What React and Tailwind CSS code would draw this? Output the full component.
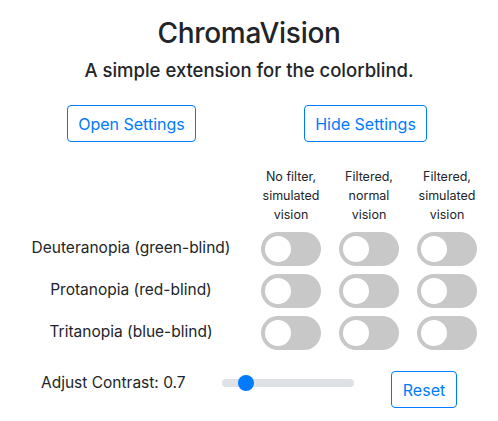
import { useState } from "react";

const font = { fontFamily: "Inter, 'Noto Sans', sans-serif" };

const rows = ["Deuteranopia (green-blind)", "Protanopia (red-blind)", "Tritanopia (blue-blind)"];
const heads = [
  ["No filter,", "simulated", "vision"],
  ["Filtered,", "normal", "vision"],
  ["Filtered,", "simulated", "vision"],
];

const Toggle = ({ on, onClick }) => (
  <button
    onClick={onClick}
    className={
      "flex h-[34px] w-[60px] items-center rounded-full px-[4px] " +
      (on ? "justify-end bg-[#2196f3]" : "justify-start bg-[#c8c8c8]")
    }
  >
    <span className="size-[26px] rounded-full bg-white" />
  </button>
);

export default function App() {
  const [state, setState] = useState(Array(9).fill(false));
  const flip = (i) => setState((s) => s.map((v, j) => (j === i ? !v : v)));

  return (
    <div className="h-[421px] w-[498px] bg-white text-[#212529]" style={font}>
      <h3 className="pt-[16px] text-center text-[28px] leading-[34px] font-medium tracking-[-0.3px]">ChromaVision</h3>
      <h5 className="mt-[8px] text-center text-[18.5px] leading-[24px] font-medium">
        A simple extension for the colorblind.
      </h5>

      <div className="mt-[23px] flex">
        <button className="ml-[67px] h-[37px] w-[129px] rounded-[4px] border border-[#007bff] text-[16px] text-[#007bff]">
          Open Settings
        </button>
        <button className="ml-[108px] h-[37px] w-[123px] rounded-[4px] border border-[#007bff] text-[16px] text-[#007bff]">
          Hide Settings
        </button>
      </div>

      <div className="mt-[25px] grid grid-cols-[252px_78px_78px_78px] items-center gap-y-[8px]">
        <div />
        {heads.map((h, i) => (
          <div key={i} className="text-center text-[12.5px] leading-[19px]">
            {h.map((l) => (
              <div key={l}>{l}</div>
            ))}
          </div>
        ))}
        {rows.map((r, ri) => (
          <div key={r} className="contents">
            <div className="pb-[3px] pl-[10px] text-center text-[15.5px]">{r}</div>
            {[0, 1, 2].map((c) => (
              <div key={c} className="flex justify-center">
                <Toggle on={state[ri * 3 + c]} onClick={() => flip(ri * 3 + c)} />
              </div>
            ))}
          </div>
        ))}
      </div>

      <div className="mt-[21px] flex items-start">
        <span className="ml-[41px] w-[181px] text-[15.5px] leading-[24px]">Adjust Contrast: 0.7</span>
        <div className="relative mt-[8px] h-[8px] w-[132px] rounded-full bg-[#dee2e6]">
          <span className="absolute top-[-4px] left-[16px] size-[16px] rounded-full bg-[#007bff]" />
        </div>
        <button className="ml-[37px] h-[37px] w-[66px] rounded-[4px] border border-[#007bff] text-[16px] text-[#007bff]">
          Reset
        </button>
      </div>
    </div>
  );
}
